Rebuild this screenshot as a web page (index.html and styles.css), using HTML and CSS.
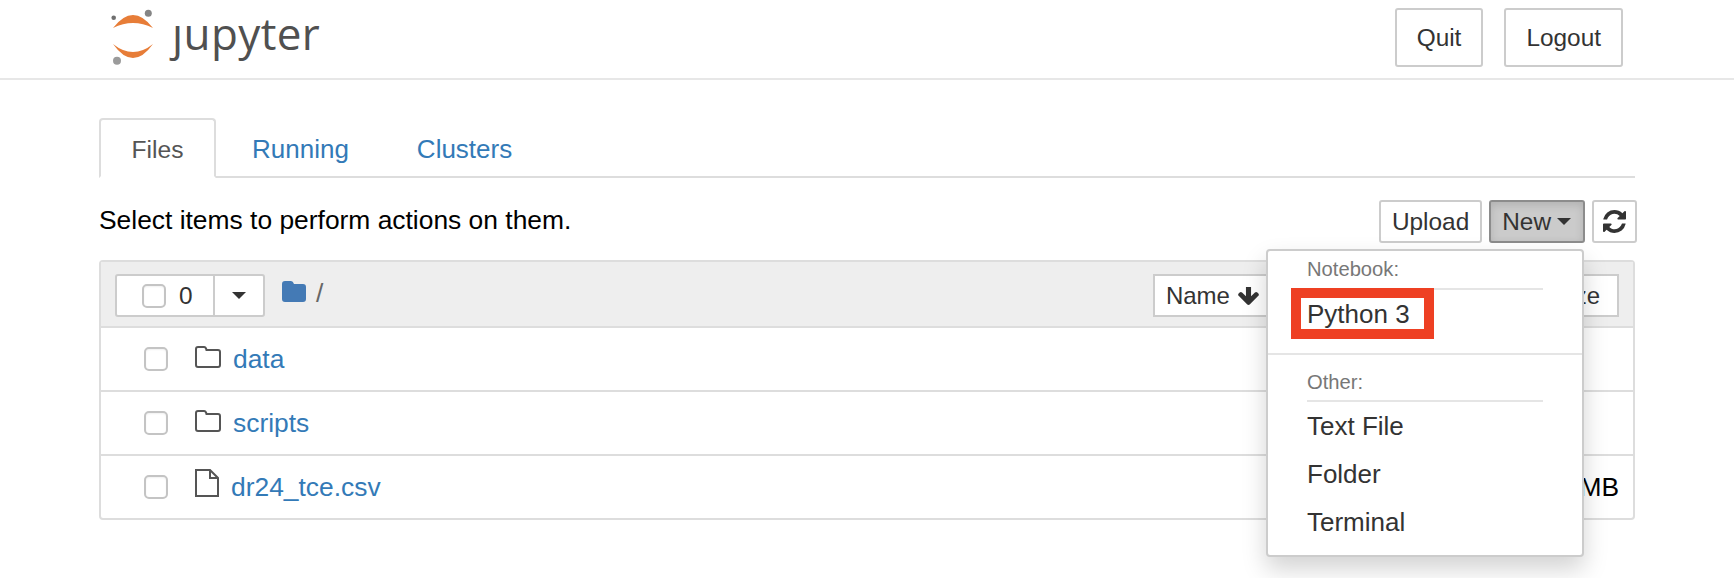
FILE: index.html
```html
<!DOCTYPE html>
<html lang="en">
<head>
<meta charset="utf-8">
<title>Jupyter</title>
<link rel="stylesheet" href="styles.css">
</head>
<body>
<header class="site-header">
  <div class="logo">
    <svg class="logo-mark" width="56" height="78" viewBox="0 0 56 78">
      <path class="logo-arc" d="M5 28Q25 2 45 28Q25 18 5 28Z"/>
      <path class="logo-arc" d="M5 44Q25 60 45 44Q25 72 5 44Z"/>
      <circle class="dot-a" cx="40.300" cy="13.300" r="3.500"/>
      <circle class="dot-b" cx="5.700" cy="17.700" r="2.300"/>
      <circle class="dot-c" cx="9" cy="60.700" r="4"/>
    </svg>
    <span class="logo-text">ȷupyter</span>
  </div>
  <div class="header-actions">
    <a class="btn btn-header">Quit</a>
    <a class="btn btn-header">Logout</a>
  </div>
</header>
<main class="container">
  <nav class="tabs">
    <a class="tab active">Files</a>
    <a class="tab">Running</a>
    <a class="tab">Clusters</a>
  </nav>
  <div class="toolbar">
    <span class="hint">Select items to perform actions on them.</span>
    <div class="toolbar-actions">
      <a class="btn btn-tool">Upload</a>
      <div class="new-wrap">
        <a class="btn btn-tool btn-open">New <i class="caret"></i></a>
        <div class="dropdown">
          <div class="drop-head">Notebook:</div>
          <div class="drop-rule"></div>
          <div class="drop-item">Python 3<span class="highlight"></span></div>
          <div class="drop-sep"></div>
          <div class="drop-head">Other:</div>
          <div class="drop-rule drop-rule-other"></div>
          <div class="drop-item">Text File</div>
          <div class="drop-item">Folder</div>
          <div class="drop-item">Terminal</div>
        </div>
      </div>
      <a class="btn btn-tool btn-icon">
        <svg width="23" height="23" viewBox="0 0 1536 1536"><path fill="#333" d="M1511 928q0 5-1 7-64 268-268 434.500t-478 166.500q-146 0-282.500-55t-243.500-157l-129 129q-19 19-45 19t-45-19-19-45v-448q0-26 19-45t45-19h448q26 0 45 19t19 45-19 45l-137 137q71 66 161 102t187 36q134 0 250-65t186-179q11-17 53-117 8-23 30-23h192q13 0 22.500 9.500t9.500 22.500zm25-800v448q0 26-19 45t-45 19h-448q-26 0-45-19t-19-45 19-45l138-138q-148-137-349-137-134 0-250 65t-186 179q-11 17-53 117-8 23-30 23h-199q-13 0-22.500-9.500t-9.500-22.500v-7q65-268 270-434.500t480-166.500q146 0 284 55.500t245 156.500l130-129q19-19 45-19t45 19 19 45z"/></svg>
      </a>
    </div>
  </div>
  <section class="panel">
    <div class="panel-head">
      <div class="select-group">
        <div class="select-main"><input class="check" type="checkbox"><span>0</span></div>
        <div class="select-caret"><i class="caret"></i></div>
      </div>
      <svg class="crumb-icon" width="24" height="21" viewBox="0 0 24 21"><path d="M3 0h6q2 0 3 3h9q3 0 3 3v12q0 3-3 3H3q-3 0-3-3V3q0-3 3-3Z"/></svg>
      <span class="crumb">/</span>
      <div class="sort-group">
        <a class="btn btn-sort">Name
          <svg width="21" height="18" viewBox="117 256 1558 1355"><path fill="#333" d="M1675 832q0 53-37 90l-651 652q-39 37-91 37-53 0-90-37l-651-652q-38-36-38-90 0-53 38-91l74-75q39-37 91-37 53 0 90 37l294 294v-704q0-52 38-90t90-38h128q52 0 90 38t38 90v704l294-294q37-37 90-37 52 0 91 37l75 75q37 39 37 91z"/></svg>
        </a>
        <a class="btn btn-sort btn-modified"></a>
        <a class="btn btn-sort">File size</a>
      </div>
    </div>
    <div class="row">
      <input class="check" type="checkbox">
      <svg class="row-icon" width="26" height="22" viewBox="0 0 26 22"><path d="M1 19V3q0-2 2-2h6q2 0 2.500 3h11.500q2 0 2 2v13q0 2-2 2H3q-2 0-2-2Z"/></svg>
      <a class="row-link">data</a>
    </div>
    <div class="row">
      <input class="check" type="checkbox">
      <svg class="row-icon" width="26" height="22" viewBox="0 0 26 22"><path d="M1 19V3q0-2 2-2h6q2 0 2.500 3h11.500q2 0 2 2v13q0 2-2 2H3q-2 0-2-2Z"/></svg>
      <a class="row-link">scripts</a>
    </div>
    <div class="row">
      <input class="check" type="checkbox">
      <svg class="row-icon row-icon-file" width="24" height="28" viewBox="0 0 24 28"><path d="M1 1h14l8 8v18H1ZM15 1v8h8"/></svg>
      <a class="row-link">dr24_tce.csv</a>
      <span class="row-size">7.6 MB</span>
    </div>
  </section>
</main>
</body>
</html>
```
FILE: styles.css
```css
* { box-sizing: border-box; }

body {
  margin: 0;
  height: 578px;
  overflow: hidden;
  background: #fff;
  color: #000;
  font-family: "Liberation Sans", Arial, sans-serif;
  font-size: 26.4px;
  line-height: 34px;
}

.site-header {
  display: flex;
  justify-content: space-between;
  height: 80px;
  padding: 8px 111px 0 108px;
  border-bottom: 2px solid #e7e7e7;
}

.logo { display: flex; margin-top: -8px; }
.logo-mark { flex: none; }
.logo-arc { fill: #e77d38; }
.dot-a { fill: #858585; }
.dot-b { fill: #6f6f6f; }
.dot-c { fill: #9b9b9b; }

.logo-text {
  margin: 3px 0 0 8px;
  font-family: "Open Sans", sans-serif;
  font-size: 44px;
  line-height: 60px;
  letter-spacing: .4px;
  color: #505050;
}

.header-actions { display: flex; gap: 21px; }

.btn {
  display: flex;
  align-items: center;
  border: 2px solid #ccc;
  border-radius: 3px;
  background: #fff;
  color: #333;
  font-size: 24.4px;
  white-space: nowrap;
}

.btn-header { height: 59px; padding: 0 20px; }

.container { width: 1536px; margin-left: 99px; }

.tabs {
  display: flex;
  gap: 4px;
  height: 98px;
  padding-top: 38px;
  border-bottom: 2px solid #ddd;
}

.tab {
  height: 60px;
  padding: 12px 30px 0;
  border: 2px solid transparent;
  color: #337ab7;
  font-size: 26px;
}

.tab.active {
  width: 117px;
  padding: 13px 0 0;
  border-color: #ddd #ddd #fff;
  border-radius: 4px 4px 0 0;
  background: #fff;
  color: #555;
  font-size: 24.6px;
  text-align: center;
}

.toolbar {
  display: flex;
  justify-content: space-between;
  height: 82px;
  padding-top: 22px;
}

.hint { margin-top: 3px; }

.toolbar-actions {
  display: flex;
  gap: 7px;
  height: 43px;
  margin-right: -2px;
}

.btn-tool { height: 43px; padding: 0 11px; }

.btn-open {
  gap: 6px;
  padding: 0 12px 0 11px;
  border-color: #8c8c8c;
  background: #cbcbcb;
  box-shadow: inset 0 3px 9px rgba(0, 0, 0, .125);
}

.btn-icon { padding: 0 9px; }

.caret {
  display: inline-block;
  width: 0;
  height: 0;
  border-top: 7.5px solid #333;
  border-left: 7.5px solid transparent;
  border-right: 7.5px solid transparent;
}

.new-wrap { position: relative; }

.dropdown {
  position: absolute;
  z-index: 10;
  top: 49px;
  right: 1px;
  width: 318px;
  height: 308px;
  padding: 6px 0 9px;
  border: 2px solid #ccc;
  border-radius: 4px;
  background: #fff;
  box-shadow: 0 12px 24px rgba(0, 0, 0, .175);
}

.drop-head {
  padding: 0 39px;
  font-size: 20.2px;
  line-height: 24px;
  color: #777;
}

.drop-rule {
  height: 2px;
  margin: 7px 39px 0;
  background: #e5e5e5;
}

.drop-rule-other { margin-top: 6px; }

.drop-item {
  position: relative;
  height: 48px;
  padding: 0 39px;
  font-size: 26px;
  line-height: 48px;
  color: #333;
}

.drop-sep {
  height: 2px;
  margin: 15px 0;
  background: #e5e5e5;
}

.highlight {
  position: absolute;
  top: -2px;
  left: 23px;
  width: 143px;
  height: 51px;
  border: 10px solid #ee4023;
}

.panel {
  height: 260px;
  border: 2px solid #ddd;
  border-radius: 4px;
}

.panel-head {
  display: flex;
  align-items: flex-start;
  height: 66px;
  padding: 12px 14px 0;
  border-bottom: 2px solid #ddd;
  background: #eee;
}

.select-group {
  display: flex;
  width: 150px;
  height: 43px;
  border: 2px solid #ccc;
  border-radius: 3px;
  background: #fff;
  color: #333;
  font-size: 24.4px;
}

.select-main {
  display: flex;
  align-items: center;
  gap: 13px;
  width: 98px;
  padding-left: 25px;
  border-right: 2px solid #ccc;
}

.select-caret {
  display: flex;
  flex: 1;
  align-items: center;
  justify-content: center;
}

.check {
  flex: none;
  appearance: none;
  width: 24px;
  height: 24px;
  margin: 0;
  border: 2px solid #c4c4c4;
  border-radius: 5px;
  background: #fff;
  box-shadow: inset 0 1px 2px rgba(0, 0, 0, .06);
}

.crumb-icon { margin: 7px 0 0 17px; fill: #447ab5; }
.crumb { margin: 2px 0 0 10px; color: #666; }

.sort-group { display: flex; margin-left: auto; }
.sort-group .btn + .btn { margin-left: -2px; }

.btn-sort { gap: 8px; height: 43px; padding: 0 17px 0 11px; border-radius: 0; font-size: 24px; }
.btn-modified { width: 225px; }

.row {
  display: flex;
  align-items: center;
  height: 64px;
  padding-left: 43px;
  border-bottom: 2px solid #ddd;
}

.row:last-child { height: 62px; border-bottom: 0; }

.row-icon {
  flex: none;
  margin: -5px 12px 0 27px;
  fill: none;
  stroke: #555;
  stroke-width: 2;
}

.row-icon-file { margin-top: -8px; }
.row-link { color: #337ab7; }
.row-size { margin: -1px 14px 0 auto; }
```
